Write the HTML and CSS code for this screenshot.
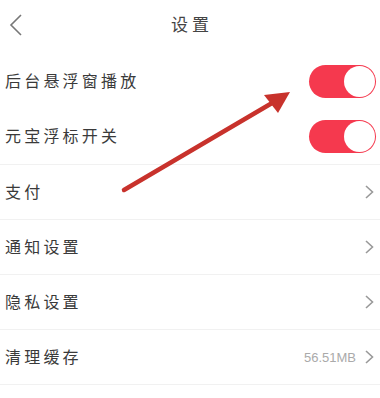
FILE: index.html
```html
<!DOCTYPE html>
<html lang="zh">
<head>
<meta charset="utf-8">
<link rel="stylesheet" href="styles.css">
</head>
<body>
<div class="page">
  <header class="header">
    <svg class="back" width="14" height="22" viewBox="0 0 14 22"><path d="M12 1 L2 11 L12 21" fill="none" stroke="#777" stroke-width="1.6"/></svg>
    <div class="title">设置</div>
  </header>
  <div class="row">
    <span class="label">后台悬浮窗播放</span>
    <span class="toggle"><span class="knob"></span></span>
  </div>
  <div class="row">
    <span class="label">元宝浮标开关</span>
    <span class="toggle"><span class="knob"></span></span>
  </div>
  <div class="row sep">
    <span class="label">支付</span>
    <span class="right"><svg class="chev" width="9" height="14" viewBox="0 0 9 14"><path d="M1 1 L7.5 7 L1 13" fill="none" stroke="#999" stroke-width="1.6"/></svg></span>
  </div>
  <div class="row sep">
    <span class="label">通知设置</span>
    <span class="right"><svg class="chev" width="9" height="14" viewBox="0 0 9 14"><path d="M1 1 L7.5 7 L1 13" fill="none" stroke="#999" stroke-width="1.6"/></svg></span>
  </div>
  <div class="row sep">
    <span class="label">隐私设置</span>
    <span class="right"><svg class="chev" width="9" height="14" viewBox="0 0 9 14"><path d="M1 1 L7.5 7 L1 13" fill="none" stroke="#999" stroke-width="1.6"/></svg></span>
  </div>
  <div class="row sep">
    <span class="label">清理缓存</span>
    <span class="right"><span class="size">56.51MB</span><svg class="chev" width="9" height="14" viewBox="0 0 9 14"><path d="M1 1 L7.5 7 L1 13" fill="none" stroke="#999" stroke-width="1.6"/></svg></span>
  </div>
  <div class="row sep tail"></div>
  <svg class="arrow" width="380" height="398" viewBox="0 0 380 398">
    <line x1="124" y1="190" x2="284" y2="96" stroke="#c8322c" stroke-width="4.5" stroke-linecap="round"/>
    <polygon points="290,92 264,95 278,113" fill="#c8322c"/>
  </svg>
</div>
</body>
</html>
```
FILE: styles.css
```css
* { box-sizing: border-box; }
html, body { margin: 0; padding: 0; background: #fff; }
body {
  font-family: "Noto Sans CJK SC", "Noto Sans", sans-serif;
  color: #333;
}
.page {
  position: relative;
  width: 380px;
  height: 398px;
  overflow: hidden;
}
.header {
  height: 54px;
  display: flex;
  align-items: flex-start;
  justify-content: center;
  position: relative;
}
.back {
  position: absolute;
  left: 9px;
  top: 14px;
}
.title {
  margin-top: 11px;
  font-size: 17px;
  letter-spacing: 4px;
  padding-left: 4px;
  color: #444;
  line-height: 26px;
}
.row {
  height: 55px;
  display: flex;
  align-items: center;
  justify-content: space-between;
  padding: 0 4px 0 5px;
}
.row.sep { border-top: 1px solid #f1f1f1; }
.row.tail { height: 20px; }
.label {
  font-size: 16px;
  letter-spacing: 3.2px;
  color: #3a3a3a;
  line-height: 20px;
  padding-bottom: 3px;
}
.toggle {
  width: 67px;
  height: 33px;
  border-radius: 17px;
  background: #f5394e;
  display: flex;
  align-items: center;
  justify-content: flex-end;
  padding-right: 1px;
}
.knob {
  width: 31px;
  height: 31px;
  border-radius: 50%;
  background: #fff;
}
.right {
  display: flex;
  align-items: center;
  gap: 9px;
  padding-right: 2px;
}
.size {
  font-size: 13px;
  color: #aaa;
  font-family: "Liberation Sans", sans-serif;
}
.arrow {
  position: absolute;
  left: 0;
  top: 0;
  pointer-events: none;
}
```
